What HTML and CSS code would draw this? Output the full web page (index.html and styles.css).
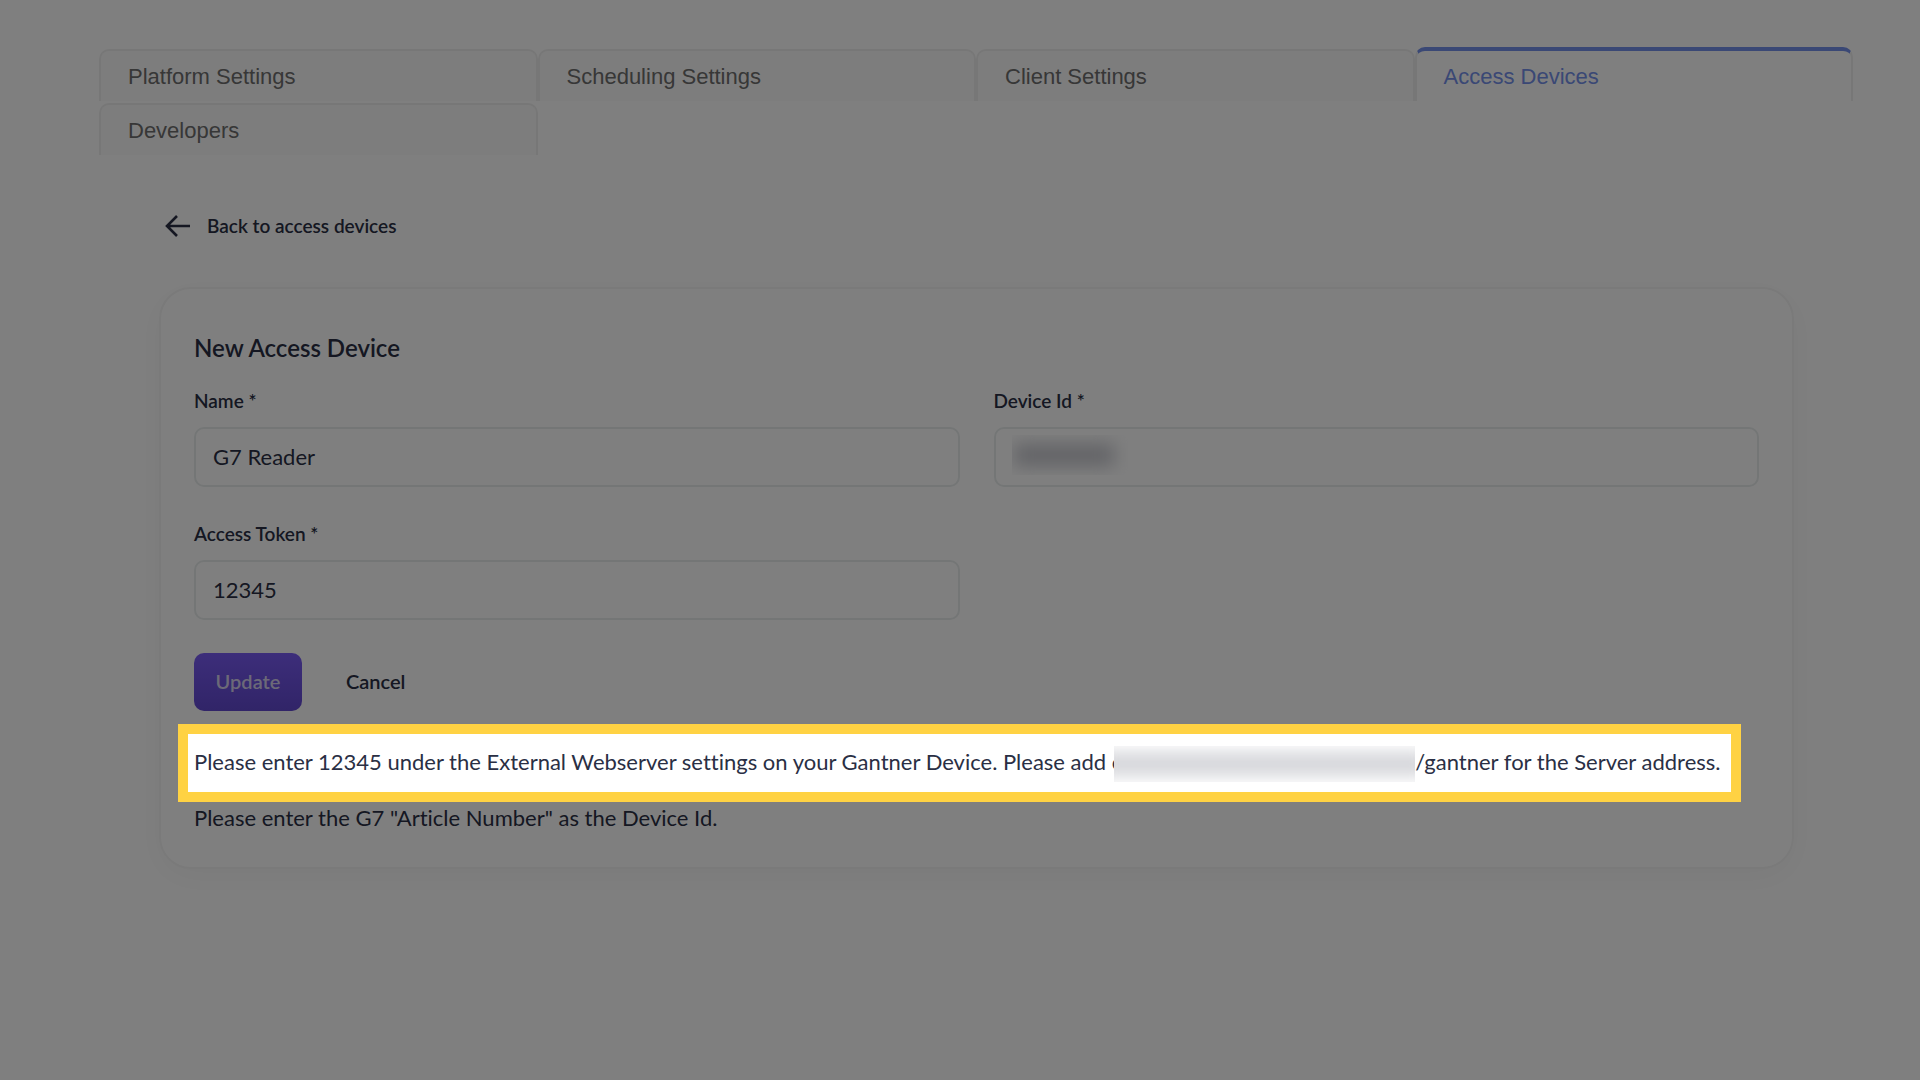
FILE: index.html
```
<!DOCTYPE html>
<html lang="en">
<head>
	<meta charset="UTF-8">
	<title>Access Devices</title>
	<link rel="stylesheet" href="styles.css">
</head>
<body>
	<div id="wrap">
		<nav class="tabs">
			<a href="#">Platform Settings</a>
			<a href="#">Scheduling Settings</a>
			<a href="#">Client Settings</a>
			<a href="#" class="active">Access Devices</a>
			<a href="#">Developers</a>
		</nav>
		<main>
			<a class="back" href="#">
				<svg width="26" height="24" viewBox="0 0 26 24"><path d="M25 12H2M12 2L2 12l10 10" fill="none" stroke="currentColor" stroke-width="2.6"/></svg>
				<span>Back to access devices</span>
			</a>
			<form class="card">
				<h1>New Access Device</h1>
				<div class="fields">
					<div class="field">
						<label for="name">Name *</label>
						<input type="text" id="name" value="G7 Reader">
					</div>
					<div class="field">
						<label for="device">Device Id *</label>
						<div class="masked">
							<input type="text" id="device">
							<span class="blur"></span>
						</div>
					</div>
					<div class="field">
						<label for="token">Access Token *</label>
						<input type="text" id="token" value="12345">
					</div>
				</div>
				<div class="actions">
					<button type="submit" class="update">Update</button>
					<button type="button" class="cancel">Cancel</button>
				</div>
				<!-- the shadow of this box dims the rest of the page -->
				<p class="spotlight">Please enter 12345 under the External Webserver settings on your Gantner Device. Please add c<span class="blur"></span>/gantner for the Server address.</p>
				<p class="hint">Please enter the G7 "Article Number" as the Device Id.</p>
			</form>
		</main>
	</div>
</body>
</html>
```

FILE: styles.css
```
*{box-sizing: border-box;}
body,h1,p{margin: 0;padding: 0;}
body{min-height: 100vh;background: #fff;color: #2a2f44;font-family: Lato,sans-serif;font-size: 22px;font-variant-ligatures: none;overflow-x: hidden;}
a{text-decoration: none;color: inherit;}
input,button{font: inherit;color: inherit;}
#wrap{padding: 49px 67px 48px 99px;}

.tabs{display: grid;grid-template-columns: repeat(4,1fr);row-gap: 2px;font-family: "Liberation Sans",Arial,sans-serif;}
.tabs a{height: 52px;padding: 0 27px;line-height: 52px;color: #6e6e6e;background: #fbfbfb;border: 2px solid #efefef;border-bottom: none;border-radius: 10px 10px 0 0;}
.tabs .active{height: 54px;margin-top: -2px;color: #7590ea;background: #fff;border-top: 4px solid #7590ea;}

main{padding: 55px 59px 0 60px;}
.back{display: flex;align-items: center;gap: 16px;width: fit-content;margin-left: 6px;line-height: 32px;font-size: 19px;font-weight: 600;}
.back svg{display: block;}
.card{margin-top: 45px;padding: 43px 33px 34px;border: 2px solid #f4f4f4;border-radius: 32px;box-shadow: 0 8px 32px rgba(0,0,0,.04);}
h1{font-size: 24px;line-height: 32px;font-weight: 600;}
.fields{display: grid;grid-template-columns: 1fr 1fr;gap: 35px 34px;margin-top: 25px;}
.field label{display: block;line-height: 24px;margin-bottom: 14px;font-size: 19px;font-weight: 600;}
.field input{display: block;width: 100%;height: 60px;padding: 0 17px 2px;background: none;border: 2px solid #e9eded;border-radius: 10px;}
.actions{display: flex;gap: 24px;margin-top: 33px;}
.actions button{height: 58px;border: none;border-radius: 10px;background: none;font-size: 20px;font-weight: 600;}
.actions .update{width: 108px;padding: 0 0 2px;color: #d8d3f0;background: linear-gradient(#7a5cf5,#6249d0);}
.actions .cancel{padding: 0 20px 2px;}

.spotlight{position: relative;z-index: 1;margin: 13px 18px 0 -16px;padding: 0 6px 2px;border: 10px solid #ffd243;line-height: 56px;white-space: nowrap;background: #fff;box-shadow: 0 0 0 9999px rgba(0,0,0,.5);}
.hint{line-height: 31px;}

/* blurred private values */
.blur{overflow: hidden;}
.blur:before{content: "";display: block;height: 100%;background: #d0d1d6;filter: blur(9px);}
.masked{position: relative;}
.masked .blur{position: absolute;left: 18px;top: 8px;width: 116px;height: 40px;padding: 9px 14px 9px 2px;}
.masked .blur:before{background: #c4c5cc;}
.spotlight .blur{display: inline-block;position: relative;width: 301px;height: 36px;margin-left: -8px;padding: 7px 0;vertical-align: middle;background: #fff;}
.spotlight .blur:before{margin: 0 -16px;}
```
